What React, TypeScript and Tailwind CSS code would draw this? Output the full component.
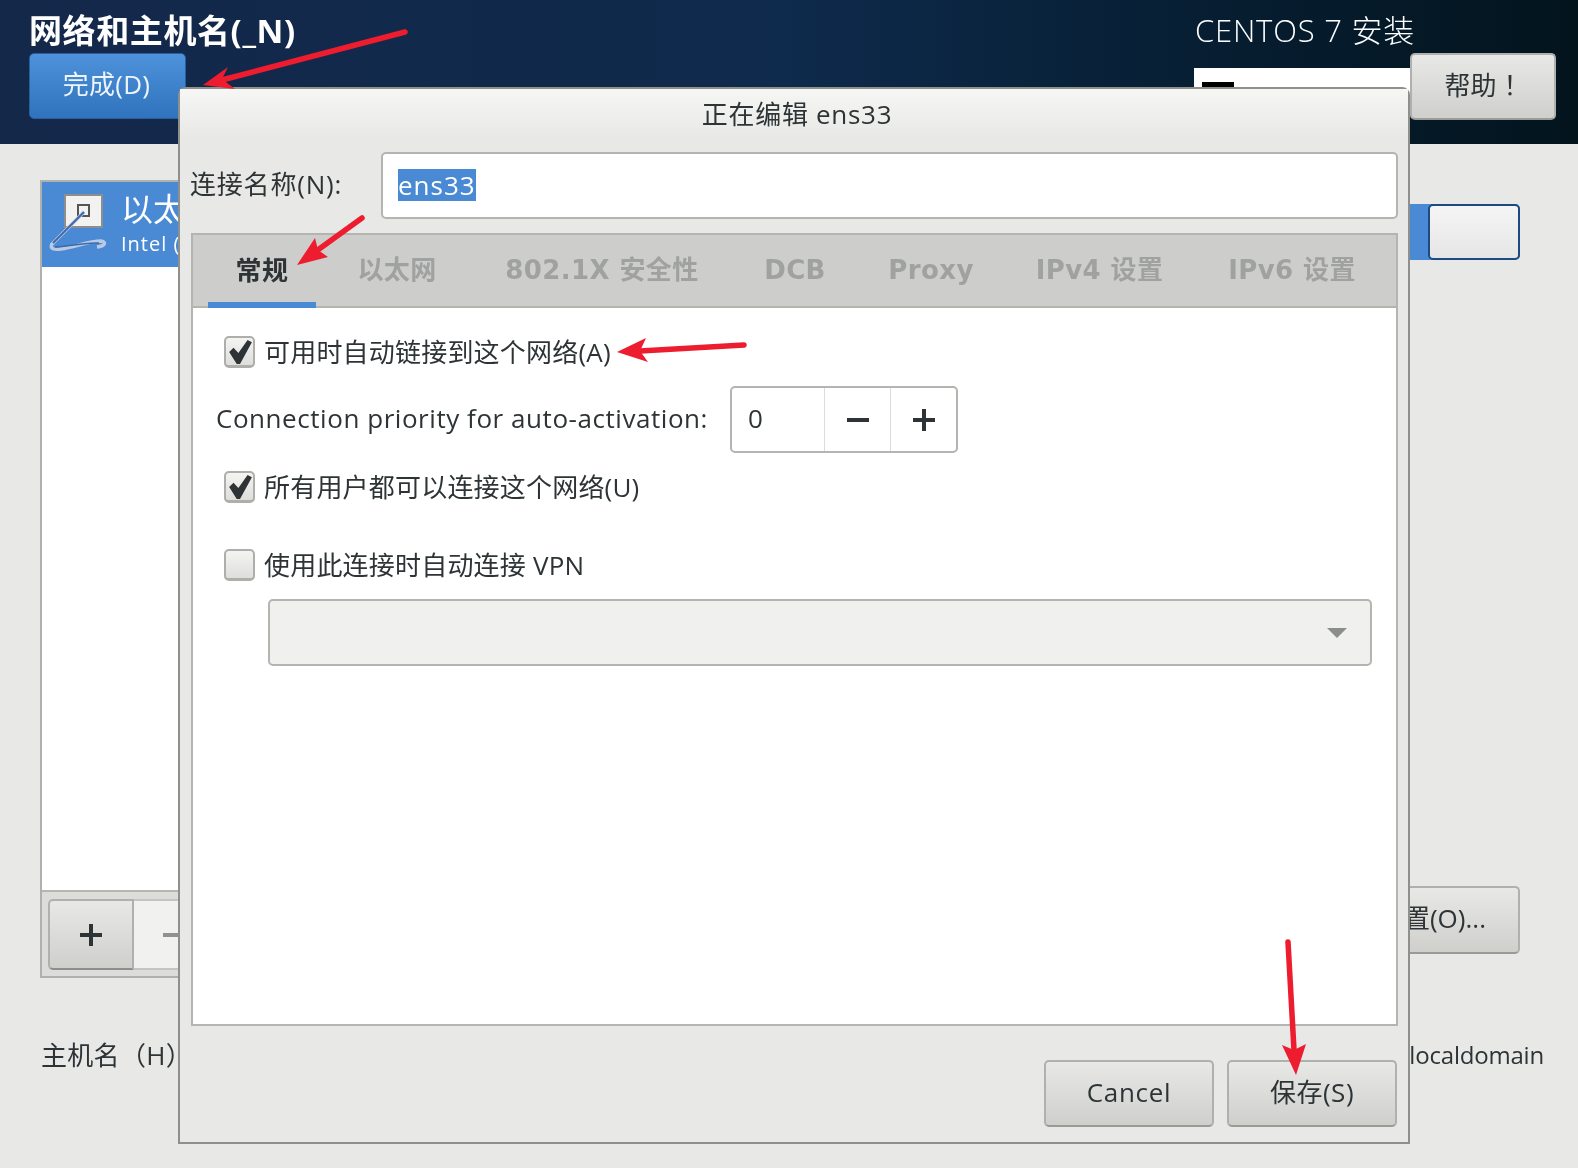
import { ReactNode } from 'react';

const sans = "font-['Open_Sans','Noto_Sans_CJK_SC',sans-serif]";

const GrayButton = ({ children, className }: { children: ReactNode; className: string }) => (
  <div className={`flex items-center justify-center rounded-[5px] border-2 border-[#b0b0ac] border-b-[#9a9a96] bg-gradient-to-b from-[#e8e8e7] to-[#cfcfcc] pb-[3px] text-[26px] text-[#2e3436] ${className}`}>
    {children}
  </div>
);

const Checkbox = ({ checked, label, className }: { checked: boolean; label: string; className: string }) => (
  <div className={`flex h-8 items-center ${className}`}>
    <div className="flex h-8 w-[31px] items-center justify-center rounded-[5px] border-2 border-[#aeaeaa] border-b-[3px] bg-gradient-to-b from-[#f4f4f3] to-[#dededc]">
      {checked && (
        <svg width="26" height="26" viewBox="0 0 24 24">
          <path d="M2 12 L6 8 L10.5 13 L19 1 L23 3 L12 23 L9 23 Z" fill="#2e3436" />
        </svg>
      )}
    </div>
    <span className="ml-[9px] text-[26px] leading-8 tracking-[0.2px] text-[#2e3436]">{label}</span>
  </div>
);

const tabs = [
  { label: '以太网', className: 'w-[136px]' },
  { label: '802.1X 安全性', className: 'w-[274px]' },
  { label: 'DCB', className: 'w-[112px]' },
  { label: 'Proxy', className: 'w-[160px]' },
  { label: 'IPv4 设置', className: 'w-[177px]' },
  { label: 'IPv6 设置', className: 'w-[208px]' },
];

// the red annotation arrows drawn over the screenshot
const Arrows = () => (
  <svg className="absolute left-0 top-0" width="1578" height="1168" viewBox="0 0 1578 1168">
    <g stroke="#ed1c2e" strokeWidth="5.5" strokeLinecap="round">
      <line x1="405" y1="32" x2="222" y2="80" />
      <line x1="362" y1="218" x2="315" y2="252" />
      <line x1="744" y1="345" x2="640" y2="351" />
      <line x1="1288" y1="942" x2="1294" y2="1050" />
    </g>
    <g fill="#ed1c2e">
      <polygon points="203,85 228,67 222,79 235,89" />
      <polygon points="297,265 315,238 318,250 328,257" />
      <polygon points="617,352 646,338 640,351 648,362" />
      <polygon points="1296,1075 1282,1045 1294,1050 1306,1044" />
    </g>
  </svg>
);

export default function App() {
  return (
    <div className={`relative h-[1168px] w-[1578px] overflow-hidden bg-[#e8e8e7] blur-[0.6px] ${sans}`}>
      {/* Header */}
      <header className="flex h-[144px] justify-between bg-gradient-to-r from-[#14284a] via-[#0e2a4c] to-[#03141d] pl-[29px] pr-[22px]">
        <div>
          <h1 className="mt-[8px] h-[45px] whitespace-nowrap text-[33px] font-bold leading-[45px] tracking-[0.6px] text-white">网络和主机名(_N)</h1>
          <div className="flex h-[66px] w-[157px] items-center justify-center rounded-[5px] border border-[#2a5f9e] bg-gradient-to-b from-[#4f92dc] to-[#2f73bd] pb-[3px] pr-[2px] text-[26px] tracking-[0.3px] text-[#eef4fb]">
            完成(D)
          </div>
        </div>
        <div className="flex flex-col items-end">
          <div className="mt-[8px] h-[45px] w-[361px] text-[31px] font-light leading-[45px] tracking-[0.8px] text-white">CENTOS 7 安装</div>
          <div className="flex items-start">
            <div className="mt-[15px] h-[60px] w-[216px] bg-white pl-2 pt-[14px]">
              <div className="h-[8px] w-[32px] bg-black" />
            </div>
            <GrayButton className="h-[67px] w-[146px] pl-[8px]">
              <span>帮助</span>
              <span className="ml-[7px]">！</span>
            </GrayButton>
          </div>
        </div>
      </header>

      {/* Main page behind the dialog */}
      <main className="flex justify-between pl-[40px] pr-[58px] pt-[36px]">
        <div className="flex h-[798px] w-[600px] flex-col border-2 border-[#b0b0ac] bg-white">
          <div className="flex h-[85px] items-center whitespace-nowrap bg-[#4a8ad4] pl-[5px] text-white">
            <svg width="66" height="66" viewBox="0 0 66 66" className="mr-[8px] shrink-0">
              <rect x="18" y="3" width="37" height="32" fill="#f2f2f0" stroke="#8e8e8c" strokeWidth="2" />
              <rect x="31" y="13" width="11" height="11" fill="none" stroke="#555" strokeWidth="2" />
              <path d="M37 20 L5 52 C2 57 8 58 14 57 C28 55 42 49 54 49 C60 50 58 54 50 55" fill="none" stroke="#b9cbe4" strokeWidth="3.5" />
              <path d="M37 20 L6 51" fill="none" stroke="#3f69a6" strokeWidth="2" />
              <path d="M8 55 C26 54 40 50 52 51" fill="none" stroke="#3f69a6" strokeWidth="1.5" />
            </svg>
            <div className="pb-[5px]">
              <div className="h-[44px] text-[32px] leading-[44px]">以太网 (ens33)</div>
              <div className="h-[26px] text-[20px] leading-[26px] tracking-[1px]">Intel (R) 82545EM Gigabit Ethernet Controller</div>
            </div>
          </div>
          <div className="flex-1" />
          <div className="flex h-[86px] items-start border-t-2 border-[#b5b5b1] bg-[#dcdcda] pl-[6px] pt-[7px]">
            <div className="flex h-[71px] w-[86px] items-center justify-center rounded-l-[5px] border-2 border-[#b0b0ac] border-b-[#8f8f8a] bg-gradient-to-b from-[#e8e8e7] to-[#cfcfcc]">
              <svg width="22" height="22" viewBox="0 0 22 22">
                <path d="M9 0h4v9h9v4h-9v9H9v-9H0V9h9z" fill="#2e3436" />
              </svg>
            </div>
            <div className="flex h-[71px] w-[120px] items-center border-y-2 border-[#c4c4c0] bg-[#f1f1f0] pl-[29px]">
              <div className="h-1 w-[22px] bg-[#8f9192]" />
            </div>
          </div>
        </div>
        <div className="flex flex-col items-end pt-[24px]">
          <div className="flex h-[56px] w-[230px] justify-end rounded-[5px] bg-[#4a8ad4]">
            <div className="h-[56px] w-[92px] rounded-[5px] border-2 border-[#1d4a82] bg-gradient-to-b from-[#f5f5f5] to-[#e6e6e6]" />
          </div>
          <GrayButton className="mt-[626px] h-[68px] w-[230px] !justify-end pr-[32px]">配置(O)...</GrayButton>
        </div>
      </main>

      <div className="flex items-center justify-between pl-[41px] pr-[34px] pt-[61px] text-[26px] leading-8 text-[#2e3436]">
        <span className="tracking-[0.3px]">主机名（H）</span>
        <span className="text-[24px] tracking-[-0.2px]">localhost.localdomain</span>
      </div>

      {/* Edit dialog */}
      <section className="absolute left-[178px] top-[87px] flex h-[1057px] w-[1232px] flex-col rounded-t-[8px] border-2 border-[#8f8f8b] bg-[#e8e8e7] text-[#2e3436]">
        <div className="flex h-[50px] items-center justify-center bg-gradient-to-b from-[#f6f6f5] to-[#e8e8e7] pl-[6px] text-[26px] tracking-[0.7px]">
          正在编辑 ens33
        </div>
        <div className="mt-[13px] flex items-center pl-[10px] pr-[10px]">
          <label className="w-[191px] pb-[2px] text-[26px] tracking-[0.8px]">连接名称(N):</label>
          <div className="flex h-[67px] flex-1 items-center rounded-[5px] border-2 border-[#b4b4b0] bg-white pb-[2px] pl-[15px]">
            <span className="bg-[#4a8ad4] text-[26px] leading-[32px] tracking-[1px] text-white">ens33</span>
          </div>
        </div>

        <div className="ml-[11px] mr-[10px] mt-[14px] flex h-[793px] flex-col border-2 border-[#b4b4b0] bg-white">
          <div className="flex h-[73px] items-stretch border-b-2 border-[#b4b4b0] bg-[#cdcdcb] pl-[15px] font-['DejaVu_Sans','Noto_Sans_CJK_SC',sans-serif] text-[26px] font-bold tracking-[0.4px] text-[#a0a2a2]">
            <div className="-mb-[2px] flex w-[108px] items-center justify-center border-b-[6px] border-[#4a8ad4] pt-[5px] text-[#2e3436]">常规</div>
            <div className="ml-[13px] flex pb-[1px]">
              {tabs.map((t) => (
                <div key={t.label} className={`flex items-center justify-center whitespace-nowrap ${t.className}`}>{t.label}</div>
              ))}
            </div>
          </div>

          <div className="flex flex-1 flex-col pt-[28px]">
            <Checkbox checked label="可用时自动链接到这个网络(A)" className="ml-[31px]" />
            <div className="ml-[23px] mt-[18px] flex h-[67px] items-center">
              <span className="w-[514px] whitespace-nowrap pb-[2px] text-[26px] tracking-[0.55px]">Connection priority for auto-activation:</span>
              <div className="flex h-[67px] w-[228px] rounded-[5px] border-2 border-[#b4b4b0]">
                <div className="flex w-[92px] items-center pb-[2px] pl-[16px] text-[26px]">0</div>
                <div className="flex w-[66px] items-center justify-center border-l border-[#dcdcda]">
                  <div className="h-1 w-[22px] bg-[#2e3436]" />
                </div>
                <div className="flex flex-1 items-center justify-center border-l border-[#dcdcda]">
                  <svg width="22" height="22" viewBox="0 0 22 22">
                    <path d="M9 0h4v9h9v4h-9v9H9v-9H0V9h9z" fill="#2e3436" />
                  </svg>
                </div>
              </div>
            </div>
            <Checkbox checked label="所有用户都可以连接这个网络(U)" className="ml-[31px] mt-[18px]" />
            <Checkbox checked={false} label="使用此连接时自动连接 VPN" className="ml-[31px] mt-[46px]" />
            <div className="ml-[75px] mt-[18px] flex h-[67px] w-[1104px] items-center justify-end rounded-[5px] border-2 border-[#b4b4b0] bg-[#f0f0ef] pr-[23px]">
              <div className="h-0 w-0 border-x-[10px] border-t-[10px] border-x-transparent border-t-[#8c8e8e]" />
            </div>
          </div>
        </div>

        <div className="mt-[34px] flex justify-end gap-[13px] pr-[11px]">
          <GrayButton className="h-[67px] w-[170px] tracking-[0.7px]">Cancel</GrayButton>
          <GrayButton className="h-[67px] w-[170px] tracking-[0.5px]">保存(S)</GrayButton>
        </div>
      </section>

      <Arrows />
    </div>
  );
}
